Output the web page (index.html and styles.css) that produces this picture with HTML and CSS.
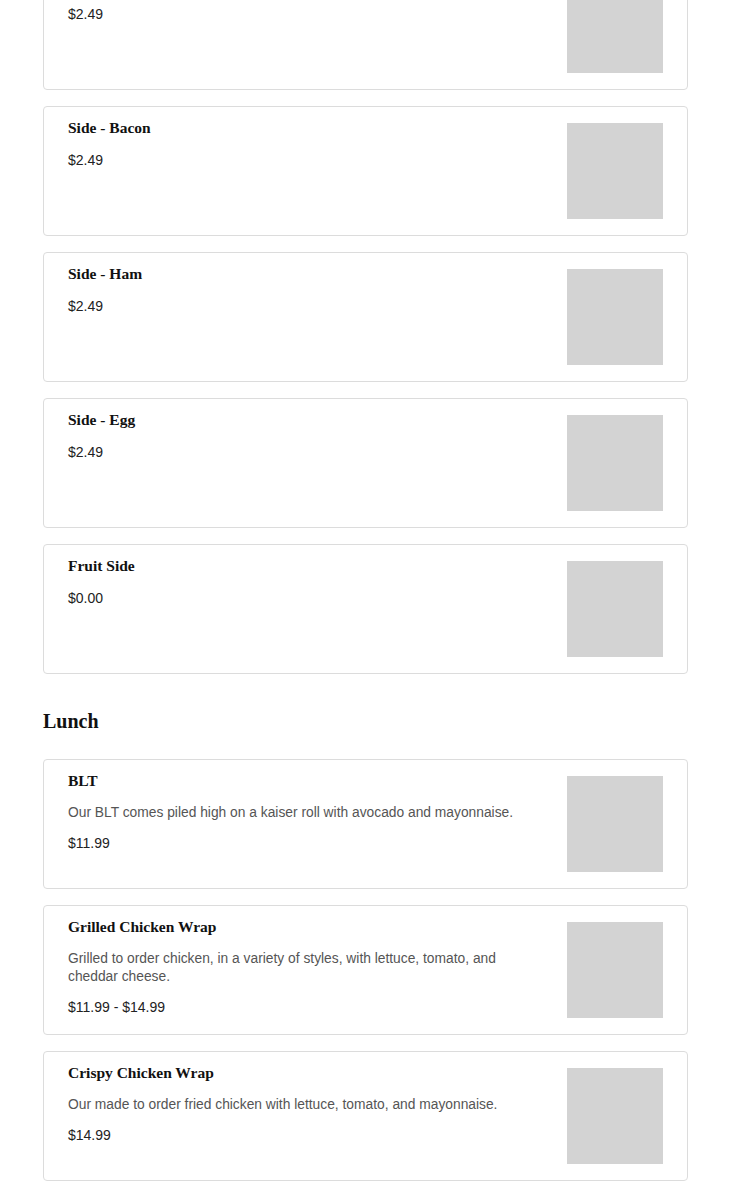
FILE: index.html
```html
<!DOCTYPE html>
<html>
<head>
<meta charset="utf-8">
<link rel="stylesheet" href="styles.css">
</head>
<body>
<main class="menu">
  <section class="section">
    <div class="card">
      <div class="info">
        <h3 class="title">Side - Sausage</h3>
        <p class="price">$2.49</p>
      </div>
      <div class="thumb"></div>
    </div>
    <div class="card">
      <div class="info">
        <h3 class="title">Side - Bacon</h3>
        <p class="price">$2.49</p>
      </div>
      <div class="thumb"></div>
    </div>
    <div class="card">
      <div class="info">
        <h3 class="title">Side - Ham</h3>
        <p class="price">$2.49</p>
      </div>
      <div class="thumb"></div>
    </div>
    <div class="card">
      <div class="info">
        <h3 class="title">Side - Egg</h3>
        <p class="price">$2.49</p>
      </div>
      <div class="thumb"></div>
    </div>
    <div class="card">
      <div class="info">
        <h3 class="title">Fruit Side</h3>
        <p class="price">$0.00</p>
      </div>
      <div class="thumb"></div>
    </div>
  </section>
  <h2 class="heading">Lunch</h2>
  <section class="section">
    <div class="card">
      <div class="info">
        <h3 class="title">BLT</h3>
        <p class="desc">Our BLT comes piled high on a kaiser roll with avocado and mayonnaise.</p>
        <p class="price">$11.99</p>
      </div>
      <div class="thumb"></div>
    </div>
    <div class="card">
      <div class="info">
        <h3 class="title">Grilled Chicken Wrap</h3>
        <p class="desc">Grilled to order chicken, in a variety of styles, with lettuce, tomato, and cheddar cheese.</p>
        <p class="price">$11.99 - $14.99</p>
      </div>
      <div class="thumb"></div>
    </div>
    <div class="card">
      <div class="info">
        <h3 class="title">Crispy Chicken Wrap</h3>
        <p class="desc">Our made to order fried chicken with lettuce, tomato, and mayonnaise.</p>
        <p class="price">$14.99</p>
      </div>
      <div class="thumb"></div>
    </div>
  </section>
</main>
</body>
</html>
```
FILE: styles.css
```css
html, body {
  margin: 0;
  padding: 0;
  background: #fff;
}
.menu {
  width: 645px;
  margin: -40px 0 0 43px;
  font-family: "Liberation Sans", Arial, sans-serif;
}
.section {
  display: flex;
  flex-direction: column;
  gap: 16px;
}
.card {
  display: flex;
  gap: 24px;
  height: 130px;
  box-sizing: border-box;
  border: 1px solid #dcdcdc;
  border-radius: 4px;
  padding: 11px 24px 16px 24px;
}
.info {
  flex: 1;
  min-width: 0;
}
.thumb {
  width: 96px;
  height: 96px;
  margin-top: 5px;
  background: #d3d3d3;
  flex: none;
}
.title {
  margin: 0 0 13px 0;
  font-family: "Liberation Serif", "Times New Roman", serif;
  font-weight: bold;
  font-size: 15.5px;
  line-height: 20px;
  color: #111;
}
.desc {
  margin: 0 0 12px 0;
  font-size: 13.8px;
  line-height: 18px;
  color: #555;
}
.price {
  margin: 0;
  font-size: 14px;
  line-height: 18px;
  color: #222;
}
.heading {
  margin: 35px 0 26px 0;
  font-family: "Liberation Serif", "Times New Roman", serif;
  font-weight: bold;
  font-size: 20px;
  line-height: 24px;
  color: #111;
}
```
